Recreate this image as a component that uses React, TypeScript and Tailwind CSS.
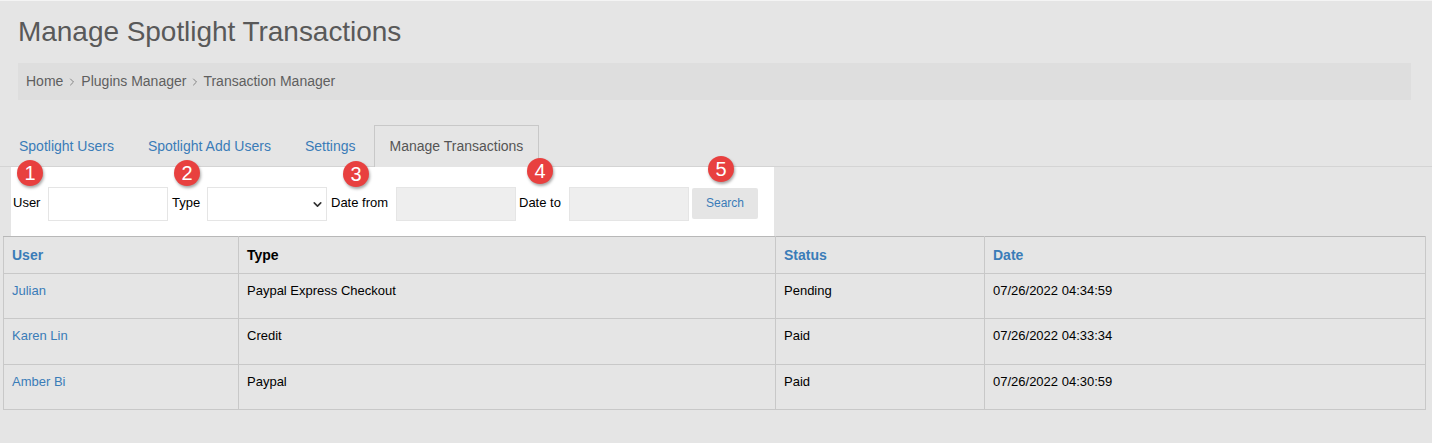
import { ChevronDown, ChevronRight } from 'lucide-react';

const rows = [
  { user: 'Julian', type: 'Paypal Express Checkout', status: 'Pending', date: '07/26/2022 04:34:59', h: 'h-[45px]' },
  { user: 'Karen Lin', type: 'Credit', status: 'Paid', date: '07/26/2022 04:33:34', h: 'h-[46px]' },
  { user: 'Amber Bi', type: 'Paypal', status: 'Paid', date: '07/26/2022 04:30:59', h: 'h-[45px]' },
];

function Badge({ n, className }: { n: number; className: string }) {
  return (
    <span
      className={`absolute flex h-[26px] w-[26px] items-center justify-center rounded-full bg-[#e8403f] text-[20px] text-white shadow-[1px_2px_3px_rgba(0,0,0,0.35)] ${className}`}
    >
      {n}
    </span>
  );
}

function Tab({ label, active, className }: { label: string; active?: boolean; className: string }) {
  return (
    <a
      className={`text-[14px] leading-[20px] ${
        active
          ? 'mb-[-1px] h-[42px] border border-b-0 border-[#c8c8c8] bg-[#e5e5e5] px-[15px] pt-[10px] text-[#555555]'
          : 'h-[41px] pt-[11px] text-[#3a7cb8]'
      } ${className}`}
    >
      {label}
    </a>
  );
}

export default function App() {
  return (
    <div className="relative h-[443px] w-[1432px] overflow-hidden border-t border-[#f4f4f4] bg-[#e5e5e5] font-['Liberation_Sans',Arial,sans-serif]">
      <h1 className="ml-[18px] pt-[13px] text-[28px] leading-[36px] tracking-[-0.04px] text-[#595959]">
        Manage Spotlight Transactions
      </h1>

      <div className="ml-[18px] mt-[13px] flex h-[37px] w-[1393px] items-center bg-[#dedede] pl-[8px] text-[14px] text-[#5f5f5f]">
        <span>Home</span>
        <ChevronRight className="mx-[3px] h-[12px] w-[12px] text-[#777777]" strokeWidth={1.75} />
        <span>Plugins Manager</span>
        <ChevronRight className="ml-[3px] mr-[2px] h-[12px] w-[12px] text-[#777777]" strokeWidth={1.75} />
        <span>Transaction Manager</span>
      </div>

      <div className="mt-[25px] flex h-[42px] items-end border-b border-[#d4d4d4]">
        <Tab label="Spotlight Users" className="ml-[19px]" />
        <Tab label="Spotlight Add Users" className="ml-[34px]" />
        <Tab label="Settings" className="ml-[34px]" />
        <Tab label="Manage Transactions" active className="ml-[18px]" />
      </div>

      <div className="ml-[11px] flex h-[69px] w-[763px] items-center bg-white pl-[2px] pt-[4px] text-[13px] text-black">
        <label className="mb-[2px] w-[35px]">User</label>
        <input className="h-[34px] w-[120px] border border-[#e5e5e5] bg-white" />
        <label className="mb-[2px] ml-[4px] w-[35px]">Type</label>
        <div className="relative">
          <select className="block h-[34px] w-[120px] appearance-none border border-[#e5e5e5] bg-white" />
          <ChevronDown className="absolute right-[3px] top-[11px] h-[13px] w-[13px] text-[#333333]" strokeWidth={3} />
        </div>
        <label className="mb-[2px] ml-[4px] w-[65px]">Date from</label>
        <input disabled className="h-[34px] w-[120px] border border-[#e5e5e5] bg-[#eeeeee]" />
        <label className="mb-[2px] ml-[3px] w-[50px]">Date to</label>
        <input disabled className="h-[34px] w-[120px] border border-[#e5e5e5] bg-[#eeeeee]" />
        <button className="ml-[3px] h-[31px] w-[66px] rounded-[2px] bg-[#e5e5e5] pb-[2px] text-[12px] text-[#3a7cb8]">
          Search
        </button>
      </div>

      <table className="ml-[3px] w-[1422px] table-fixed border-collapse text-[13px] text-black">
        <colgroup>
          <col className="w-[235px]" />
          <col className="w-[537px]" />
          <col className="w-[209px]" />
          <col className="w-[441px]" />
        </colgroup>
        <thead>
          <tr className="h-[37px] text-left text-[14px]">
            <th className="border border-[#c8c8c8] border-t-[#b8b8b8] pl-[8px] text-[#3a7cb8]">User</th>
            <th className="border border-[#c8c8c8] border-t-[#b8b8b8] pl-[8px]">Type</th>
            <th className="border border-[#c8c8c8] border-t-[#b8b8b8] pl-[8px] text-[#3a7cb8]">Status</th>
            <th className="border border-[#c8c8c8] border-t-[#b8b8b8] pl-[8px] text-[#3a7cb8]">Date</th>
          </tr>
        </thead>
        <tbody>
          {rows.map((r) => (
            <tr key={r.user} className={r.h}>
              <td className="border border-[#c8c8c8] pb-[11px] pl-[8px] text-[#3a7cb8]">{r.user}</td>
              <td className="border border-[#c8c8c8] pb-[11px] pl-[8px]">{r.type}</td>
              <td className="border border-[#c8c8c8] pb-[11px] pl-[8px]">{r.status}</td>
              <td className="border border-[#c8c8c8] pb-[11px] pl-[8px]">{r.date}</td>
            </tr>
          ))}
        </tbody>
      </table>

      <Badge n={1} className="left-[17px] top-[159px]" />
      <Badge n={2} className="left-[174px] top-[159px]" />
      <Badge n={3} className="left-[343px] top-[160px]" />
      <Badge n={4} className="left-[527px] top-[157px]" />
      <Badge n={5} className="left-[708px] top-[155px]" />
    </div>
  );
}
